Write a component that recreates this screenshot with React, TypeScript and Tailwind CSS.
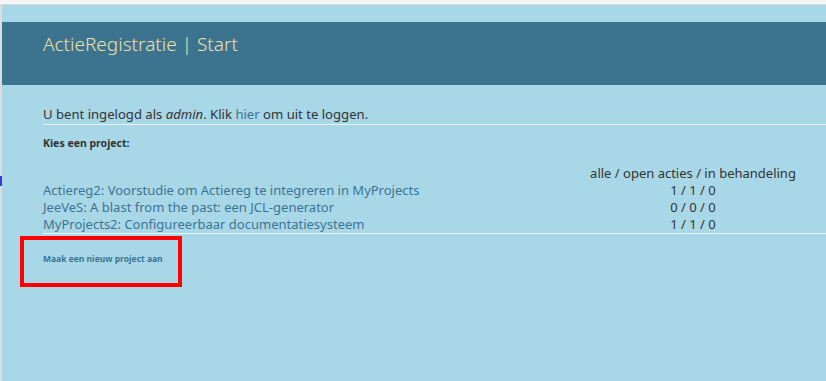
const projects = [
  { name: "Actiereg2: Voorstudie om Actiereg te integreren in MyProjects", counts: "1 / 1 / 0" },
  { name: "JeeVeS: A blast from the past: een JCL-generator", counts: "0 / 0 / 0" },
  { name: "MyProjects2: Configureerbaar documentatiesysteem", counts: "1 / 1 / 0" },
];

export default function App() {
  return (
    <div
      className="h-[381px] w-[826px] overflow-hidden bg-[#f4f4f4] pt-[4px]"
      style={{ fontFamily: '"Noto Sans", "Open Sans", sans-serif' }}
    >
      <div className="h-full border-t border-[#d8d8d8] flex">
        <div className="w-[2px] bg-[#dcdcdc] relative">
          <div className="absolute left-0 top-[171px] h-[10px] w-[2px] bg-[#3b3bd8]" />
        </div>
        <div className="flex-1 bg-[#a8d8e8] pt-[17px]">
          <div className="h-[63px] bg-[#3c7490] pl-[41px] pt-[9px]">
            <h1 className="text-[19px] leading-[26px] font-light text-[#ebe2a8]">
              ActieRegistratie | Start
            </h1>
          </div>
          <div className="pl-[41px] pt-[20px]">
            <p className="border-b border-[#e8f4f8] text-[13.1px] leading-[18px] text-[#333] pb-[1px]">
              U bent ingelogd als <em>admin</em>. Klik{" "}
              <a className="text-[#3c7490]">hier</a> om uit te loggen.
            </p>
            <p className="mt-[11px] text-[10.5px] font-bold leading-[14px] text-[#333]">
              Kies een project:
            </p>
            <div className="mt-[15px] border-b border-[#e8f4f8] pr-[28px] text-[13px] leading-[17px]">
              <div className="flex">
                <div className="flex-1" />
                <div className="w-[210px] text-center text-[#333]">
                  alle / open acties / in behandeling
                </div>
              </div>
              {projects.map((p) => (
                <div key={p.name} className="flex">
                  <a className="flex-1 text-[#3c7490]">{p.name}</a>
                  <div className="w-[210px] text-center text-[#333]">{p.counts}</div>
                </div>
              ))}
            </div>
          </div>
          <div className="ml-[18px] mt-[2px] h-[51px] w-[162px] border-4 border-[#ff0000] pl-[19px] pt-[13px]">
            <a className="block text-[8.5px] font-bold leading-[12px] text-[#3c7490]">
              Maak een nieuw project aan
            </a>
          </div>
        </div>
      </div>
    </div>
  );
}
